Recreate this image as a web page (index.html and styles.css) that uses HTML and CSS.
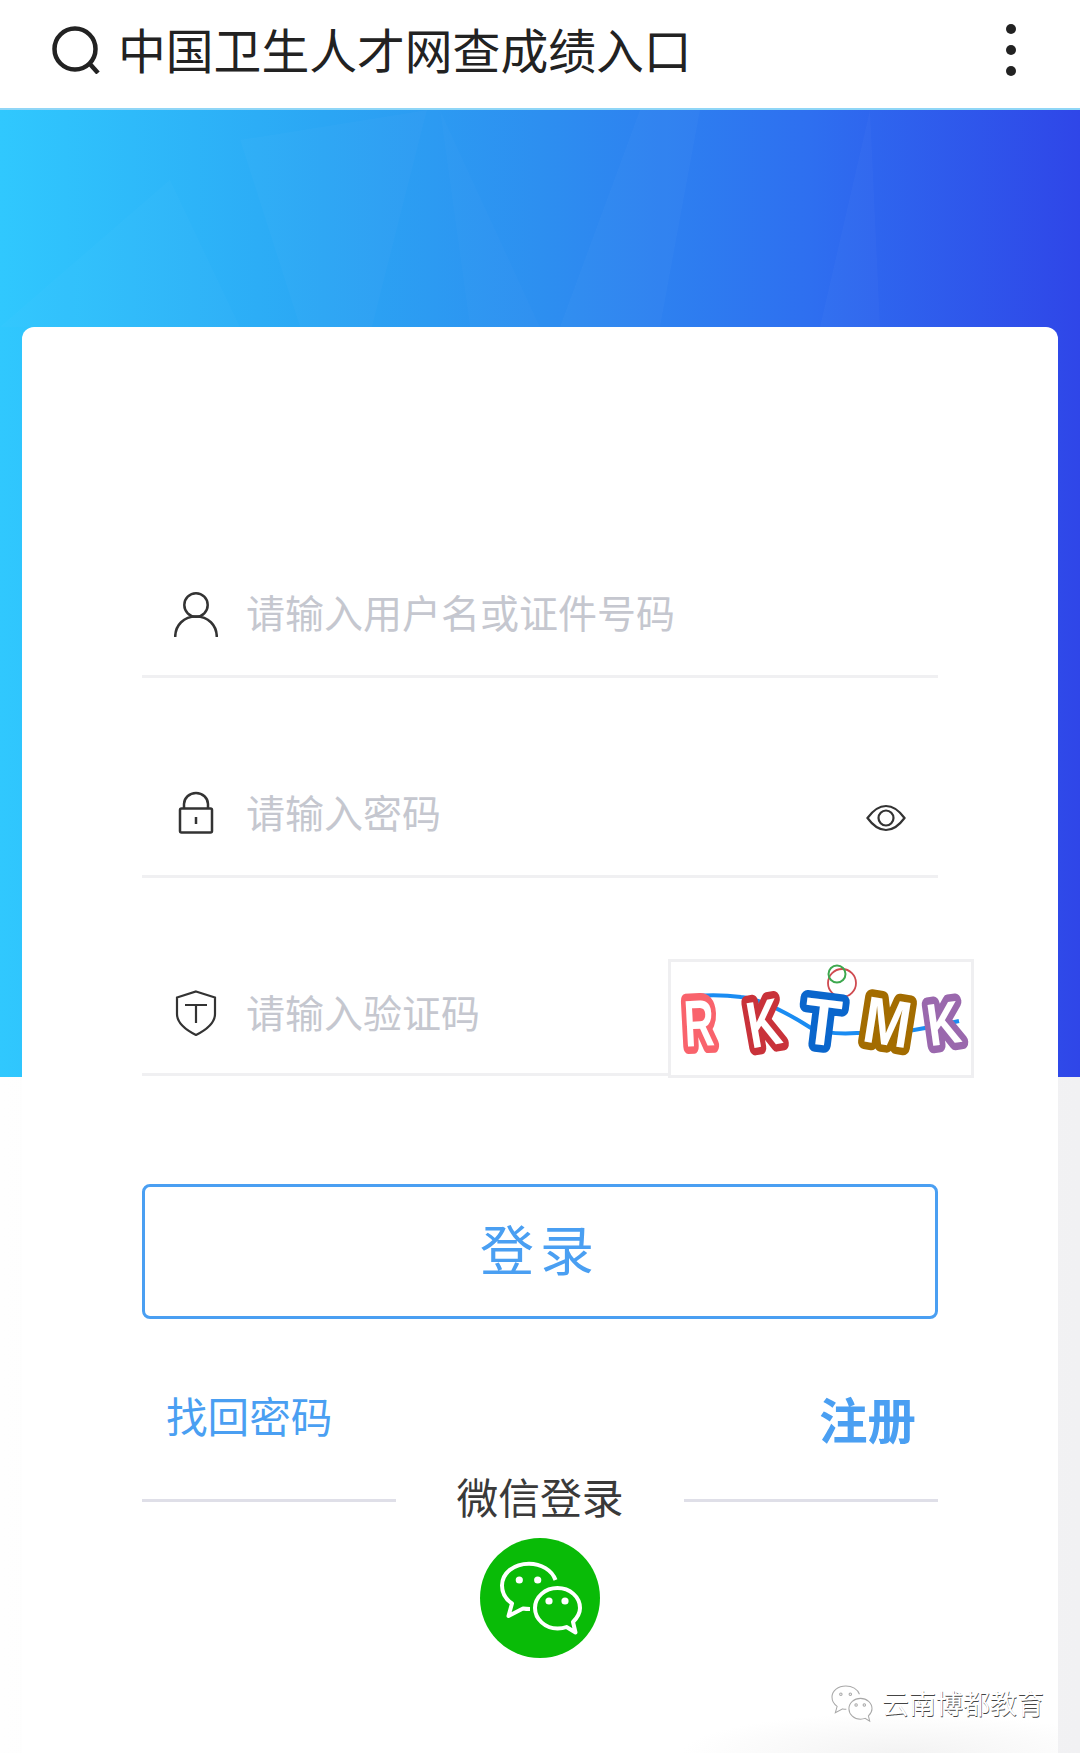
FILE: index.html
```html
<!DOCTYPE html>
<html lang="zh-CN">

<head>
    <meta charset="UTF-8">
    <meta name="viewport" content="width=device-width, initial-scale=1.0">
    <title>中国卫生人才网查成绩入口</title>
    <link rel="stylesheet" href="styles.css">
</head>

<body>
    <header class="topbar">
        <svg class="search-icon" viewBox="0 0 48 48" fill="none" stroke="#222" stroke-width="4.5">
            <circle cx="23" cy="23" r="20.5" />
            <path d="M37.5 37.5 L46 47" />
        </svg>
        <div class="title">中国卫生人才网查成绩入口</div>
        <div class="menu-dots"><i></i><i></i><i></i></div>
    </header>

    <main class="stage">
        <!-- faint facets on the blue background -->
        <svg class="facets" viewBox="0 0 1080 218" preserveAspectRatio="none" fill="#fff">
            <polygon points="240,30 427,0 372,218 300,218" opacity="0.02" />
            <polygon points="0,218 170,70 240,218" opacity="0.015" />
            <polygon points="560,218 640,0 700,0 660,218" opacity="0.025" />
            <polygon points="820,218 870,0 880,218" opacity="0.025" />
            <polygon points="440,0 540,218 470,218" opacity="0.015" />
        </svg>

        <section class="card">
            <div class="form">
                <div class="field">
                    <svg class="field-icon icon-person" viewBox="0 0 44 46" fill="none" stroke="#333" stroke-width="2.5">
                        <circle cx="22" cy="13" r="11.7" />
                        <path d="M1.2 45 C1.2 33 10 24.5 22 24.5 C34 24.5 42.8 33 42.8 45" />
                    </svg>
                    <span class="placeholder">请输入用户名或证件号码</span>
                </div>

                <div class="field">
                    <svg class="field-icon" viewBox="0 0 44 44" fill="none" stroke="#333" stroke-width="2.5">
                        <rect x="6" y="17.5" width="32" height="24" rx="1.5" />
                        <path d="M10 17.5 V13 A12 11 0 0 1 34 13 V17.5" />
                        <path d="M22 26 V33" />
                    </svg>
                    <span class="placeholder">请输入密码</span>
                    <svg class="eye-icon" viewBox="0 0 40 28" fill="none" stroke="#333" stroke-width="2.2">
                        <path d="M1.5 14 C8 5 14 2 20 2 C26 2 32 5 38.5 14 C32 23 26 26 20 26 C14 26 8 23 1.5 14 Z" />
                        <circle cx="20" cy="14" r="7.5" />
                    </svg>
                </div>

                <div class="code-row">
                    <div class="field field-code">
                        <svg class="field-icon" viewBox="0 0 44 46" fill="none" stroke="#333" stroke-width="2.2">
                            <path d="M22 1.5 L41 7.5 V24 C41 33 32 40 22 45 C12 40 3 33 3 24 V7.5 Z" />
                            <path d="M11 15 H33 M22 15 V33" />
                        </svg>
                        <span class="placeholder">请输入验证码</span>
                    </div>
                    <svg class="captcha" viewBox="0 0 300 113">
                        <path d="M13 36 C30 32 55 33 70 35 C90 37 115 50 140 66 C155 72 170 72 186 71 C205 71 225 71 243 68 C260 65 275 62 288 59"
                            fill="none" stroke="#1a8cf2" stroke-width="4" />
                        <circle cx="171" cy="21" r="14" fill="none" stroke="#cf4a50" stroke-width="1.8" />
                        <circle cx="166" cy="12" r="8.5" fill="none" stroke="#3da84f" stroke-width="2" />
                        <text class="captcha-letter letter-r" x="13" y="84" textLength="30" lengthAdjust="spacingAndGlyphs" transform="rotate(-3 28 60)">R</text>
                        <text class="captcha-letter letter-k" x="76" y="84" textLength="33" lengthAdjust="spacingAndGlyphs" transform="rotate(-10 93 60)">K</text>
                        <text class="captcha-letter letter-t" x="133" y="83" textLength="37" lengthAdjust="spacingAndGlyphs" transform="rotate(7 152 60)">T</text>
                        <text class="captcha-letter letter-m" x="193" y="83" textLength="47" lengthAdjust="spacingAndGlyphs" transform="rotate(9 217 60)">M</text>
                        <text class="captcha-letter letter-k2" x="256" y="82" textLength="33" lengthAdjust="spacingAndGlyphs" transform="rotate(-8 273 60)">K</text>
                    </svg>
                </div>

                <button class="login-btn">登录</button>

                <div class="links">
                    <a class="link-forgot">找回密码</a>
                    <a class="link-register">注册</a>
                </div>

                <div class="divider">
                    <span class="divider-line"></span>
                    <span class="divider-text">微信登录</span>
                    <span class="divider-line"></span>
                </div>

                <svg class="wechat-btn" viewBox="0 0 120 120">
                    <circle cx="60" cy="60" r="60" fill="#09bb07" />
                    <g fill="none" stroke="#fff" stroke-width="4" stroke-linejoin="round">
                        <path d="M75.5 42 C72 32 61 25.7 49 25.7 C34 25.7 22 35 22 47.5 C22 55 26 61.5 32 65.5 L28.5 78 L43 70.5 Q46 71 50 71" />
                        <path d="M77.5 50 C65 50 55 59 55 70 C55 81 65 90.5 77.5 90.5 C81 90.5 84 90 86.5 89 L95.5 94.5 L93 84 C97 80 100 75.5 100 70 C100 59 90 50 77.5 50 Z" />
                    </g>
                    <g fill="#fff">
                        <circle cx="39.3" cy="42" r="3.6" />
                        <circle cx="57.7" cy="42" r="3.6" />
                        <circle cx="69" cy="63" r="3.6" />
                        <circle cx="85" cy="63" r="3.6" />
                    </g>
                </svg>
            </div>

            <!-- account watermark stamped over the page -->
            <div class="watermark">
                <svg class="watermark-icon" viewBox="18 22 86 76" fill="none" stroke="#a8a8a8" stroke-width="2">
                    <path d="M75.5 42 C72 32 61 25.7 49 25.7 C34 25.7 22 35 22 47.5 C22 55 26 61.5 32 65.5 L28.5 78 L43 70.5 Q46 71 50 71" />
                    <path d="M77.5 50 C65 50 55 59 55 70 C55 81 65 90.5 77.5 90.5 C81 90.5 84 90 86.5 89 L95.5 94.5 L93 84 C97 80 100 75.5 100 70 C100 59 90 50 77.5 50 Z" />
                    <circle cx="39.3" cy="42" r="2.4" />
                    <circle cx="57.7" cy="42" r="2.4" />
                    <circle cx="69" cy="63" r="2.4" />
                    <circle cx="85" cy="63" r="2.4" />
                </svg>
                <span class="watermark-text">云南博都教育</span>
            </div>
        </section>
    </main>
</body>

</html>
```

FILE: styles.css
```css
* {
    box-sizing: border-box;
}

html,
body {
    margin: 0;
    height: 1753px;
    overflow: hidden;
}

body {
    display: flex;
    flex-direction: column;
    font-family: "Noto Sans CJK SC", "Noto Sans", sans-serif;
    background-color: #fff;
}

.topbar {
    display: flex;
    align-items: center;
    height: 110px;
    padding: 0 64px 8px 52px;
    background-color: #fff;
    border-bottom: 2px solid #8fd6f7;
}

.search-icon {
    width: 48px;
    height: 48px;
    flex-shrink: 0;
}

.title {
    margin-left: 18px;
    margin-bottom: 2px;
    font-size: 47.8px;
    line-height: 60px;
    color: #222;
}

.menu-dots {
    display: flex;
    flex-direction: column;
    gap: 11px;
    margin-left: auto;
}

.menu-dots i {
    display: block;
    width: 10px;
    height: 10px;
    border-radius: 50%;
    background-color: #222;
}

.stage {
    position: relative;
    flex: 1;
    display: flex;
    padding: 217px 22px 0;
    background:
        linear-gradient(90deg, #30c8fe 0%, #2ba6f4 30%, #2d8ff0 50%, #2e6ff0 75%, #2f46e8 100%) top / 100% 967px no-repeat,
        linear-gradient(90deg, #fefefe 0%, #f1f1f3 100%);
}

.facets {
    position: absolute;
    top: 0;
    left: 0;
    width: 100%;
    height: 217px;
}

.card {
    position: relative;
    flex: 1;
    padding-top: 231px;
    border-radius: 12px 12px 0 0;
    background:
        radial-gradient(ellipse 220px 40px at 880px 100%, #f3f3f3, rgba(255, 255, 255, 0)),
        #fff;
}

.form {
    display: flex;
    flex-direction: column;
    margin: 0 120px;
}

.field {
    display: flex;
    align-items: center;
    height: 120px;
    padding-bottom: 7px;
    border-bottom: 3px solid #f0f0f2;
}

.field+.field {
    margin-top: 80px;
}

.field-icon {
    width: 44px;
    height: 46px;
    margin-left: 32px;
    margin-right: 28px;
    flex-shrink: 0;
}

.icon-person {
    margin-top: 4px;
}

.placeholder {
    margin-bottom: 4px;
    font-size: 39px;
    line-height: 50px;
    color: #c5c7cf;
}

.eye-icon {
    width: 40px;
    height: 28px;
    margin-left: auto;
    margin-right: 32px;
    margin-top: 10px;
}

.code-row {
    display: flex;
    align-items: flex-start;
    margin-top: 80px;
    margin-right: -36px;
}

.field-code {
    flex: 1;
    height: 118px;
    padding-bottom: 5px;
}

.captcha {
    width: 306px;
    height: 119px;
    margin-top: 1px;
    margin-left: -1px;
    flex-shrink: 0;
    border: 3px solid #efeff1;
    background-color: #fff;
}

.captcha-letter {
    font-family: "Liberation Sans", sans-serif;
    font-weight: 700;
    font-size: 66px;
    fill: #fff;
    stroke-width: 15px;
    stroke-linejoin: round;
    paint-order: stroke;
}

.letter-r {
    stroke: #f9636c;
}

.letter-k {
    stroke: #c9323a;
}

.letter-t {
    stroke: #0a66cc;
}

.letter-m {
    stroke: #a36c00;
}

.captcha .letter-k2 {
    font-size: 60px;
    stroke: #9a68ad;
}

.login-btn {
    height: 135px;
    margin-top: 106px;
    padding-bottom: 10px;
    border: 3px solid #4a9ff2;
    border-radius: 8px;
    background-color: #fff;
    font-family: inherit;
    font-size: 54px;
    letter-spacing: 6px;
    color: #4a9ff2;
}

.links {
    display: flex;
    justify-content: space-between;
    align-items: flex-start;
    margin-top: 66px;
    padding: 0 22px 0 24px;
    color: #4a9ff2;
}

.link-forgot {
    font-size: 41.6px;
    line-height: 60px;
}

.link-register {
    font-size: 48.5px;
    line-height: 66px;
    font-weight: 700;
}

.divider {
    display: flex;
    align-items: center;
    margin-top: 16px;
}

.divider-line {
    flex: 1;
    height: 3px;
    margin-top: 9px;
    background-color: #dfdfe8;
}

.divider-text {
    margin: 0 60px;
    font-size: 41.8px;
    line-height: 58px;
    color: #3a3a3a;
}

.wechat-btn {
    width: 120px;
    height: 120px;
    margin-top: 13px;
    align-self: center;
}

.watermark {
    position: absolute;
    right: 14px;
    bottom: 30px;
    display: flex;
    align-items: center;
    gap: 7px;
}

.watermark-icon {
    width: 46px;
    height: 39px;
}

.watermark-text {
    font-size: 27px;
    line-height: 40px;
    color: #fff;
    text-shadow: 0.6px 0.6px 0.6px #444;
}
```
